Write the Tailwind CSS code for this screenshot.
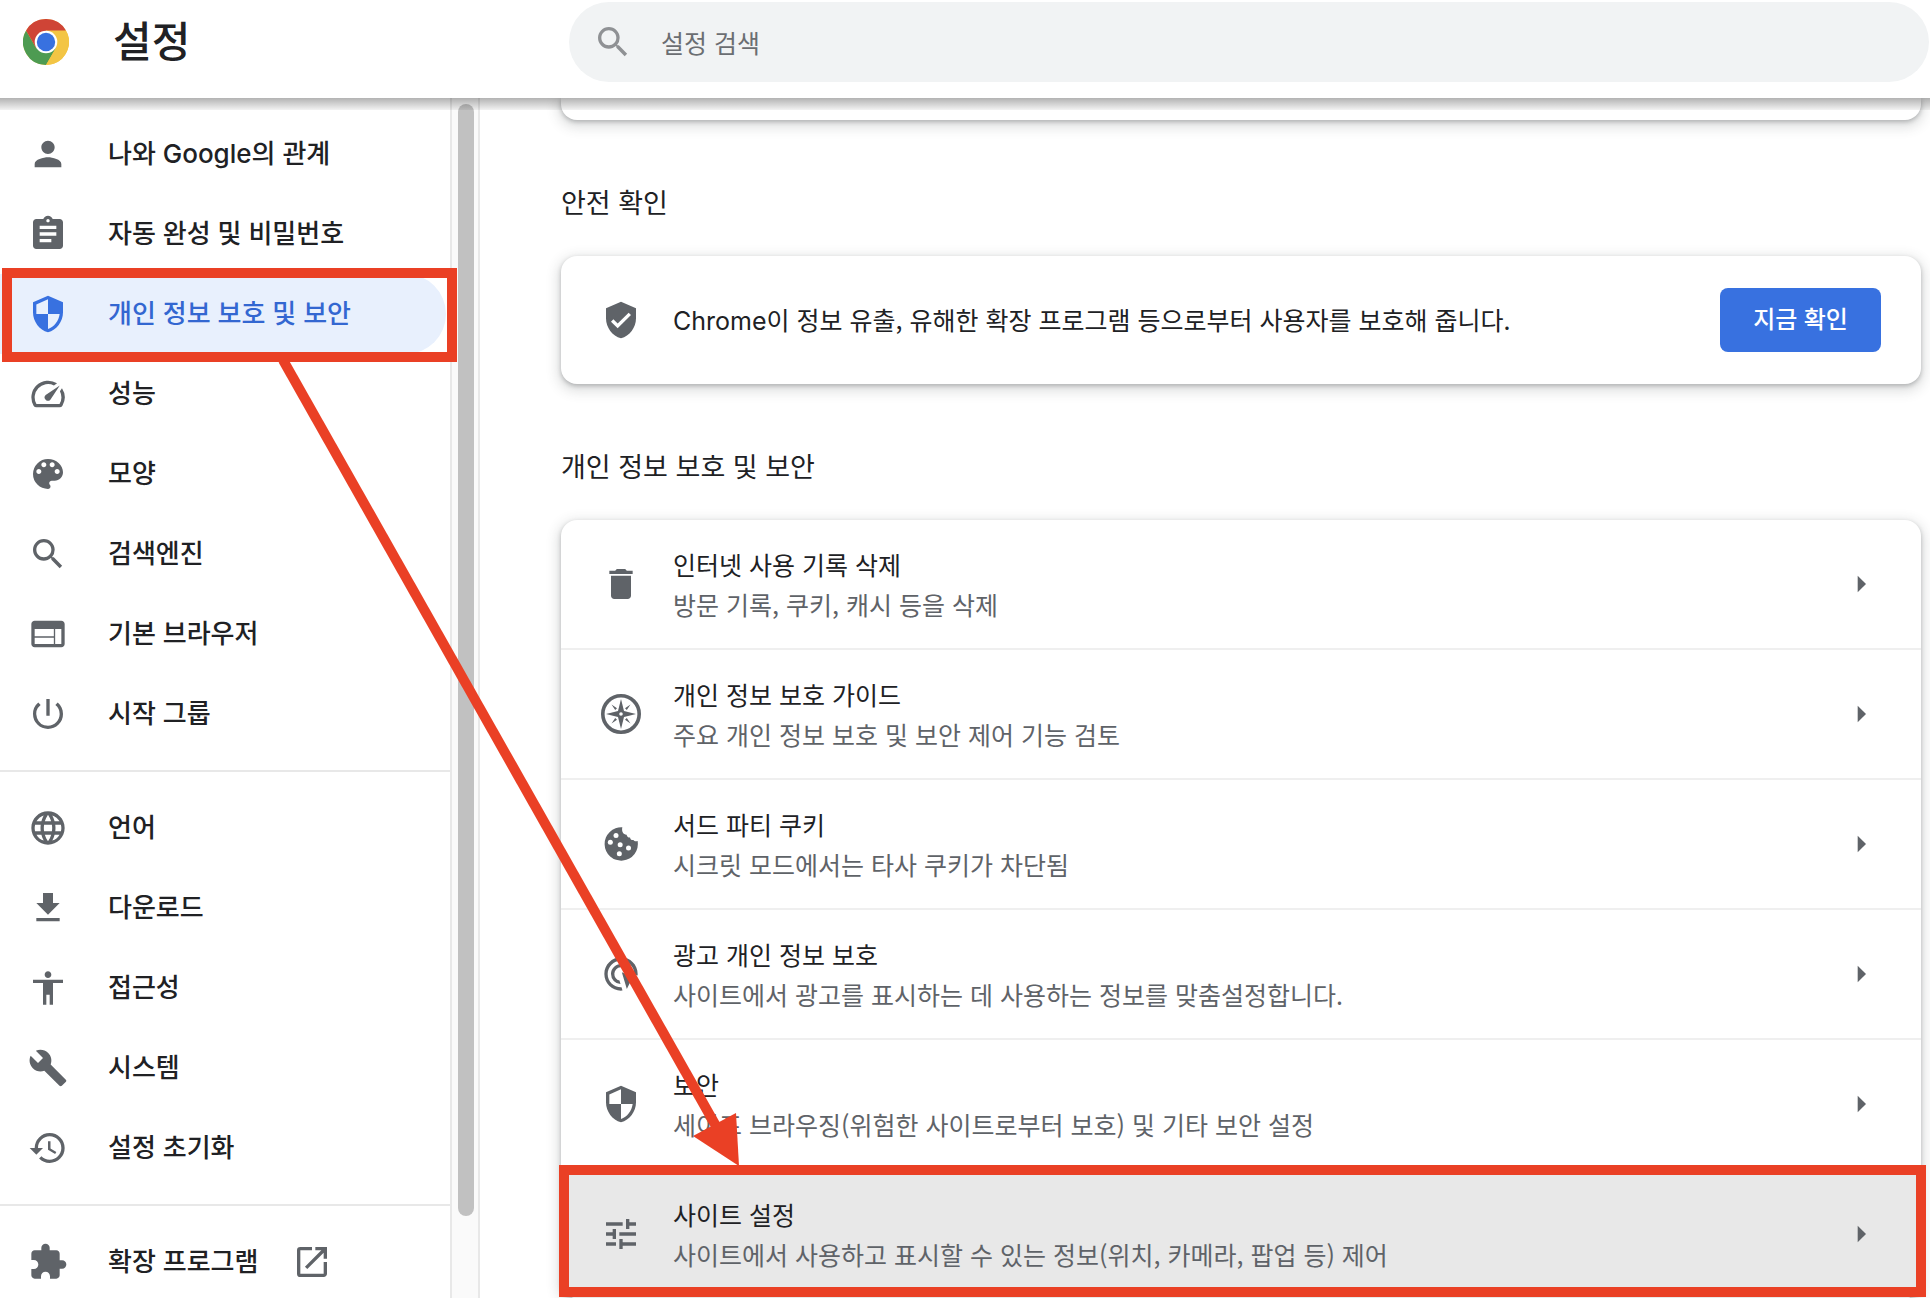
<!DOCTYPE html>
<html lang="ko">
<head>
<meta charset="utf-8">
<title>설정</title>
<script src="https://cdn.jsdelivr.net/npm/@tailwindcss/browser@4"></script>
</head>
<body class="relative h-screen overflow-hidden bg-white font-['Noto_Sans_CJK_KR',sans-serif] text-[#202124]">
<div class="flex h-full flex-col">

  <header class="relative z-10 flex h-[98px] shrink-0 bg-white">
    <div class="flex h-[84px] w-[569px] shrink-0 items-center gap-11 pl-[23px]">
      <svg class="size-[46px]" viewBox="0 0 46 46" aria-hidden="true">
        <circle cx="23" cy="23" r="23" fill="#f3c544"/>
        <path d="M23 23 3.08 11.5A23 23 0 0 1 42.92 11.5Z" fill="#cf4436"/>
        <path d="M3.08 11.5A23 23 0 0 0 23 46L33 28.8 13 28.8Z" fill="#4d9b52"/>
        <path d="M3.08 11.5 13 28.8 23 23 23 11.5Z" fill="#cf4436"/>
        <path d="M42.92 11.5H23V23L33 28.8 23 46A23 23 0 0 0 42.92 11.5Z" fill="#f3c544"/>
        <circle cx="23" cy="23" r="11.3" fill="#fff"/>
        <circle cx="23" cy="23" r="9.2" fill="#3871e0"/>
      </svg>
      <h1 class="pb-1.5 text-[42px] leading-[56px] font-medium">설정</h1>
    </div>
    <label class="mt-0.5 mr-px flex h-20 flex-1 items-center gap-7 rounded-full bg-[#f1f3f4] pl-6">
      <svg class="size-10 shrink-0 fill-[#8f9194]" viewBox="0 0 24 24" aria-hidden="true"><path d="M15.5 14h-.79l-.28-.27A6.471 6.471 0 0 0 16 9.5 6.5 6.5 0 1 0 9.5 16c1.61 0 3.09-.59 4.23-1.57l.27.28v.79l5 4.99L20.49 19l-4.99-5zm-6 0C7.01 14 5 11.99 5 9.5S7.01 5 9.5 5 14 7.01 14 9.5 11.99 14 9.5 14z"/></svg>
      <input type="text" aria-label="설정 검색" placeholder="설정 검색" class="h-full min-w-0 flex-1 bg-transparent text-[25px] outline-none placeholder:text-[#6b6e72]">
    </label>
    <div class="absolute inset-x-0 top-full h-3 bg-linear-to-b from-black/30 to-black/5"></div>
  </header>

  <div class="flex min-h-0 flex-1">
    <nav class="h-full w-[450px] shrink-0 font-['Inter','Noto_Sans_CJK_KR',sans-serif] text-[26px] leading-10 font-medium">
      <ul class="py-4 [&_a]:flex [&_a]:h-20 [&_a]:items-center [&_a]:gap-10 [&_a]:pl-7 [&_svg]:size-10 [&_svg]:shrink-0 [&_svg]:fill-[#5f6368]">
        <li><a href="#people"><svg viewBox="0 0 24 24"><path d="M12 12c2.21 0 4-1.79 4-4s-1.79-4-4-4-4 1.79-4 4 1.79 4 4 4zm0 2c-2.67 0-8 1.34-8 4v2h16v-2c0-2.66-5.33-4-8-4z"/></svg>나와 Google의 관계</a></li>
        <li><a href="#autofill"><svg viewBox="0 0 24 24"><path d="M19 3h-4.18C14.4 1.84 13.3 1 12 1c-1.3 0-2.4.84-2.82 2H5c-1.1 0-2 .9-2 2v14c0 1.1.9 2 2 2h14c1.1 0 2-.9 2-2V5c0-1.1-.9-2-2-2zm-7 0c.55 0 1 .45 1 1s-.45 1-1 1-1-.45-1-1 .45-1 1-1zm2 14H7v-2h7v2zm3-4H7v-2h10v2zm0-4H7V7h10v2z"/></svg>자동 완성 및 비밀번호</a></li>
        <li class="relative mr-1"><a href="#privacy" class="rounded-r-full bg-[#e8f0fd] text-[#3367d1]"><svg class="fill-[#3871e0]!" viewBox="0 0 24 24"><path d="M12 1 3 5v6c0 5.55 3.84 10.74 9 12 5.16-1.26 9-6.45 9-12V5l-9-4zm0 10.990h7c-.53 4.12-3.28 7.790-7 8.940V12H5V6.300l7-3.110v8.800z"/></svg>개인 정보 보호 및 보안</a>
          <span class="pointer-events-none absolute -top-1.5 -right-[11px] -bottom-2 left-0.5 border-10 border-[#ea4025]"></span></li>
        <li><a href="#performance"><svg viewBox="0 0 24 24"><path d="m20.380 8.570-1.230 1.850a8 8 0 0 1-.22 7.580H5.070A8 8 0 0 1 15.580 6.850l1.850-1.230A10 10 0 0 0 3.350 19a2 2 0 0 0 1.720 1h13.850a2 2 0 0 0 1.740-1 10 10 0 0 0-.27-10.440zm-9.790 6.840a2 2 0 0 0 2.830 0l5.660-8.490-8.490 5.660a2 2 0 0 0 0 2.830z"/></svg>성능</a></li>
        <li><a href="#appearance"><svg viewBox="0 0 24 24"><path d="M12 3a9 9 0 0 0 0 18c.83 0 1.500-.67 1.500-1.500 0-.39-.15-.74-.39-1.010-.23-.26-.38-.61-.38-.99 0-.83.67-1.500 1.500-1.500H16c2.760 0 5-2.240 5-5 0-4.420-4.030-8-9-8zm-5.500 9c-.83 0-1.500-.67-1.500-1.500S5.670 9 6.500 9 8 9.670 8 10.500 7.330 12 6.500 12zm3-4C8.670 8 8 7.330 8 6.500S8.670 5 9.500 5s1.500.67 1.500 1.500S10.330 8 9.500 8zm5 0c-.83 0-1.500-.67-1.500-1.500S13.670 5 14.500 5s1.500.67 1.500 1.500S15.330 8 14.500 8zm3 4c-.83 0-1.500-.67-1.500-1.500S16.670 9 17.500 9s1.500.67 1.500 1.500-.67 1.500-1.500 1.500z"/></svg>모양</a></li>
        <li><a href="#search"><svg viewBox="0 0 24 24"><path d="M15.5 14h-.79l-.28-.27A6.471 6.471 0 0 0 16 9.5 6.5 6.5 0 1 0 9.5 16c1.61 0 3.09-.59 4.23-1.57l.27.28v.79l5 4.99L20.49 19l-4.99-5zm-6 0C7.01 14 5 11.99 5 9.5S7.01 5 9.5 5 14 7.01 14 9.5 11.99 14 9.5 14z"/></svg>검색엔진</a></li>
        <li><a href="#default"><svg viewBox="0 0 24 24"><path d="M20 4H4c-1.100 0-1.990.9-1.990 2L2 18c0 1.100.9 2 2 2h16c1.100 0 2-.9 2-2V6c0-1.100-.9-2-2-2zm-4.500 14H4v-3.800h11.500V18zm0-4.700H4V9h11.500v4.300zM20 18h-3.700V9H20v9z"/></svg>기본 브라우저</a></li>
        <li><a href="#startup"><svg viewBox="0 0 24 24"><path d="M13 3h-2v10h2V3zm4.830 2.170-1.420 1.420A6.920 6.920 0 0 1 19 12c0 3.870-3.130 7-7 7A6.995 6.995 0 0 1 7.580 6.580L6.170 5.170A8.932 8.932 0 0 0 3 12a9 9 0 0 0 18 0c0-2.740-1.230-5.180-3.170-6.830z"/></svg>시작 그룹</a></li>
        <li class="my-4 h-0.5 bg-[#e8e8e8]" role="separator"></li>
        <li><a href="#languages"><svg viewBox="0 0 24 24"><path d="M11.990 2C6.470 2 2 6.480 2 12s4.470 10 9.990 10C17.520 22 22 17.520 22 12S17.520 2 11.990 2zm6.930 6h-2.950a15.650 15.650 0 0 0-1.380-3.560A8.030 8.030 0 0 1 18.920 8zM12 4.040c.83 1.200 1.480 2.530 1.910 3.960h-3.820c.43-1.430 1.080-2.760 1.910-3.960zM4.260 14C4.100 13.360 4 12.690 4 12s.1-1.360.26-2h3.380c-.08.66-.14 1.320-.14 2s.06 1.340.14 2H4.260zm.82 2h2.950c.32 1.250.78 2.450 1.380 3.560A7.987 7.987 0 0 1 5.080 16zm2.950-8H5.080a7.987 7.987 0 0 1 4.330-3.560A15.650 15.650 0 0 0 8.030 8zM12 19.960c-.83-1.200-1.480-2.530-1.910-3.960h3.820c-.43 1.430-1.080 2.760-1.910 3.960zM14.340 14H9.660c-.09-.66-.16-1.320-.16-2s.07-1.350.16-2h4.680c.09.65.16 1.320.16 2s-.07 1.340-.16 2zm.25 5.560c.6-1.110 1.060-2.310 1.380-3.560h2.950a8.030 8.030 0 0 1-4.330 3.560zM16.360 14c.08-.66.14-1.320.14-2s-.06-1.340-.14-2h3.380c.16.64.26 1.310.26 2s-.1 1.360-.26 2h-3.380z"/></svg>언어</a></li>
        <li><a href="#downloads"><svg viewBox="0 0 24 24"><path d="M19 9h-4V3H9v6H5l7 7 7-7zM5 18v2h14v-2H5z"/></svg>다운로드</a></li>
        <li><a href="#accessibility"><svg viewBox="0 0 24 24"><path d="M12 2c1.100 0 2 .9 2 2s-.9 2-2 2-2-.9-2-2 .9-2 2-2zm9 7h-6v13h-2v-6h-2v6H9V9H3V7h18v2z"/></svg>접근성</a></li>
        <li><a href="#system"><svg viewBox="0 0 24 24"><path d="m22.700 19-9.100-9.100c.9-2.300.4-5-1.500-6.900-2-2-5-2.400-7.400-1.300L9 6 6 9 1.600 4.700C.4 7.100.9 10.100 2.900 12.100c1.900 1.900 4.600 2.400 6.900 1.500l9.100 9.100c.4.400 1 .400 1.400 0l2.300-2.300c.5-.4.5-1.100.1-1.400z"/></svg>시스템</a></li>
        <li><a href="#reset"><svg viewBox="0 0 24 24"><path d="M13 3a9 9 0 0 0-9 9H1l3.890 3.890.07.14L9 12H6c0-3.870 3.130-7 7-7s7 3.130 7 7-3.130 7-7 7c-1.930 0-3.680-.79-4.940-2.060l-1.420 1.420A8.954 8.954 0 0 0 13 21a9 9 0 0 0 0-18zm-1 5v5l4.280 2.540.72-1.210-3.500-2.080V8H12z"/></svg>설정 초기화</a></li>
        <li class="my-4 h-0.5 bg-[#e8e8e8]" role="separator"></li>
        <li><a href="#extensions"><svg viewBox="0 0 24 24"><path d="M20.500 11H19V7c0-1.100-.9-2-2-2h-4V3.500a2.500 2.500 0 0 0-5 0V5H4c-1.100 0-1.990.9-1.990 2v3.800H3.500c1.490 0 2.700 1.210 2.700 2.700s-1.210 2.700-2.700 2.700H2V20c0 1.100.9 2 2 2h3.800v-1.500c0-1.490 1.210-2.700 2.700-2.700s2.700 1.210 2.700 2.700V22H17c1.100 0 2-.9 2-2v-4h1.500a2.500 2.500 0 0 0 0-5z"/></svg>확장 프로그램<svg class="-ml-1.5" viewBox="0 0 24 24"><path d="M19 19H5V5h7V3H5a2 2 0 0 0-2 2v14a2 2 0 0 0 2 2h14c1.100 0 2-.9 2-2v-7h-2v7zM14 3v2h3.590l-9.830 9.830 1.410 1.410L19 6.410V10h2V3h-7z"/></svg></a></li>
      </ul>
    </nav>
    <div class="w-[30px] shrink-0 border-x-2 border-[#e8e8e8] bg-[#fafafa] px-1.5 pt-1.5" aria-hidden="true">
      <div class="h-[1112px] w-4 rounded-full bg-[#c1c1c1]"></div>
    </div>

    <main class="min-w-0 flex-1 pr-[9px] pl-[81px]">
      <div class="h-[22px] rounded-b-2xl bg-white shadow-[0_2px_4px_rgba(60,64,67,0.3),0_4px_12px_4px_rgba(60,64,67,0.15)]"></div>

      <h2 class="flex h-[136px] items-center pt-8 font-['Inter','Noto_Sans_CJK_KR',sans-serif] text-[27px] leading-10">안전 확인</h2>
      <section class="flex h-32 items-center gap-8 rounded-2xl bg-white px-10 text-[25px] leading-10 shadow-[0_2px_4px_rgba(60,64,67,0.3),0_4px_12px_4px_rgba(60,64,67,0.15)]">
        <svg class="size-10 shrink-0 fill-[#5f6368]" viewBox="0 0 24 24"><path d="M12 1 3 5v6c0 5.550 3.840 10.740 9 12 5.160-1.260 9-6.450 9-12V5l-9-4zm-2 16-4-4 1.410-1.410L10 14.170l6.590-6.590L18 9l-8 8z"/></svg>
        <p class="min-w-0 flex-1"><span class="font-['Inter']">Chrome</span>이 정보 유출, 유해한 확장 프로그램 등으로부터 사용자를 보호해 줍니다.</p>
        <button type="button" class="h-16 w-[161px] rounded-lg bg-[#3871e0] font-['Inter','Noto_Sans_CJK_KR',sans-serif] text-2xl font-medium text-white">지금 확인</button>
      </section>

      <h2 class="flex h-[136px] items-center pt-8 font-['Inter','Noto_Sans_CJK_KR',sans-serif] text-[27px] leading-10">개인 정보 보호 및 보안</h2>
      <ul class="divide-y-2 divide-[#efefef] rounded-2xl bg-white text-[25px] leading-10 shadow-[0_2px_4px_rgba(60,64,67,0.3),0_4px_12px_4px_rgba(60,64,67,0.15)] [&_a]:flex [&_a]:h-32 [&_a]:items-center [&_a]:gap-8 [&_a]:px-10 [&_p]:text-[#5f6368] [&_svg]:size-10 [&_svg]:shrink-0 [&_svg]:fill-[#5f6368]">
        <li><a href="#clear"><svg viewBox="0 0 24 24"><path d="M6 19c0 1.100.9 2 2 2h8c1.100 0 2-.9 2-2V7H6v12zM19 4h-3.500l-1-1h-5l-1 1H5v2h14V4z"/></svg><div class="min-w-0 flex-1"><h3>인터넷 사용 기록 삭제</h3><p>방문 기록, 쿠키, 캐시 등을 삭제</p></div><svg viewBox="0 0 24 24"><path d="m10 17 5-5-5-5z"/></svg></a></li>
        <li><a href="#guide"><svg viewBox="0 0 40 40"><circle cx="20" cy="20" r="18.200" fill="none" stroke="#5f6368" stroke-width="3.600"/><path fill-rule="evenodd" d="M20 5 23 17 35 20 23 23 20 35 17 23 5 20 17 17ZM20 18.200a1.800 1.800 0 1 0 0 3.600 1.800 1.800 0 0 0 0-3.600Z"/><path d="m10.500 10.500 5.500 3.700-1.800 1.800ZM29.500 10.500l-3.700 5.500-1.800-1.800ZM29.500 29.500l-5.500-3.700 1.800-1.800ZM10.500 29.500l3.700-5.500 1.800 1.800Z"/></svg><div class="min-w-0 flex-1"><h3>개인 정보 보호 가이드</h3><p>주요 개인 정보 보호 및 보안 제어 기능 검토</p></div><svg viewBox="0 0 24 24"><path d="m10 17 5-5-5-5z"/></svg></a></li>
        <li><a href="#cookies"><svg viewBox="0 0 24 24"><path d="M12.800 2A10 10 0 1 0 22 10.200c-1.100.3-2 .2-2.600-.6-.9.200-1.900-.4-2-1.500-1 .1-1.900-.6-2-1.700-1.900.1-3.200-1.800-2.600-4.400z"/><g fill="#fff"><circle cx="9" cy="6.900" r="1.500"/><circle cx="5.600" cy="11" r="1.500"/><circle cx="11.500" cy="12.400" r="1.500"/><circle cx="16.500" cy="14.400" r="1.500"/><circle cx="11" cy="17.800" r="1.500"/></g></svg><div class="min-w-0 flex-1"><h3>서드 파티 쿠키</h3><p>시크릿 모드에서는 타사 쿠키가 차단됨</p></div><svg viewBox="0 0 24 24"><path d="m10 17 5-5-5-5z"/></svg></a></li>
        <li><a href="#ads"><svg viewBox="0 0 24 24"><path d="M11.710 17.990A5.993 5.993 0 0 1 6 12c0-3.310 2.690-6 6-6 3.220 0 5.840 2.530 5.990 5.710l-2.100-.63a3.999 3.999 0 1 0-4.810 4.810l.63 2.100zM22 12c0 .3-.01.6-.04.9l-1.970-.59c.01-.1.010-.21.010-.31 0-4.420-3.580-8-8-8s-8 3.580-8 8 3.580 8 8 8c.1 0 .21 0 .31-.01l.59 1.970c-.3.030-.6.040-.9.040-5.520 0-10-4.480-10-10S6.480 2 12 2s10 4.480 10 10z"/><path d="m12.500 11 9 4-3.700 1.300L15.500 21z"/></svg><div class="min-w-0 flex-1"><h3>광고 개인 정보 보호</h3><p>사이트에서 광고를 표시하는 데 사용하는 정보를 맞춤설정합니다.</p></div><svg viewBox="0 0 24 24"><path d="m10 17 5-5-5-5z"/></svg></a></li>
        <li><a href="#security"><svg viewBox="0 0 24 24"><path d="M12 1 3 5v6c0 5.550 3.840 10.740 9 12 5.160-1.260 9-6.450 9-12V5l-9-4zm0 10.990h7c-.53 4.120-3.280 7.790-7 8.940V12H5V6.300l7-3.110v8.800z"/></svg><div class="min-w-0 flex-1"><h3>보안</h3><p>세이프 브라우징(위험한 사이트로부터 보호) 및 기타 보안 설정</p></div><svg viewBox="0 0 24 24"><path d="m10 17 5-5-5-5z"/></svg></a></li>
        <li class="relative"><a href="#site" class="rounded-b-2xl bg-[#e8e8e8]"><svg viewBox="0 0 24 24"><path d="M3 17v2h6v-2H3zM3 5v2h10V5H3zm10 16v-2h8v-2h-8v-2h-2v6h2zM7 9v2H3v2h4v2h2V9H7zm14 4v-2H11v2h10zm-6-4h2V7h4V5h-4V3h-2v6z"/></svg><div class="min-w-0 flex-1"><h3>사이트 설정</h3><p>사이트에서 사용하고 표시할 수 있는 정보(위치, 카메라, 팝업 등) 제어</p></div><svg viewBox="0 0 24 24"><path d="m10 17 5-5-5-5z"/></svg></a>
          <span class="pointer-events-none absolute -top-[5px] -right-[5px] bottom-px -left-0.5 border-10 border-[#ea4025]"></span></li>
      </ul>
    </main>
  </div>
</div>

<svg class="pointer-events-none absolute top-[360px] left-[276px] z-20 h-[806px] w-[464px] fill-[#ea4025]" viewBox="0 0 464 806" aria-hidden="true">
  <path d="M7 0 440 766" stroke="#ea4025" stroke-width="10"/>
  <path d="M463 806 417 776 460 753Z"/>
</svg>
</body>
</html>
